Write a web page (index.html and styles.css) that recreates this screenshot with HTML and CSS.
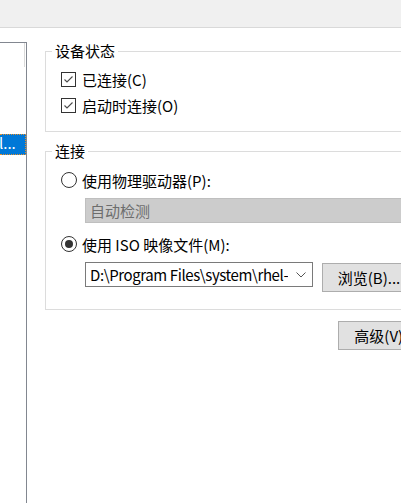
FILE: index.html
```html
<!DOCTYPE html>
<html lang="zh-CN">
<head>
<meta charset="utf-8">
<title>CD/DVD 设置</title>
<link rel="stylesheet" href="styles.css">
</head>
<body>
<div class="topbar"></div>
<div class="main">
  <div class="sidebar">
    <div class="list-head"></div>
    <div class="item-selected">l...</div>
  </div>
  <div class="content">
    <fieldset class="group status">
      <legend>设备状态</legend>
      <label class="check-row">
        <span class="checkbox"><svg viewBox="0 0 13 13" width="13" height="13"><polyline points="2.5,6.5 5,9 10.5,3.5" fill="none" stroke="#4a4a4a" stroke-width="1.1"/></svg></span>
        <span>已连接(C)</span>
      </label>
      <label class="check-row">
        <span class="checkbox"><svg viewBox="0 0 13 13" width="13" height="13"><polyline points="2.5,6.5 5,9 10.5,3.5" fill="none" stroke="#4a4a4a" stroke-width="1.1"/></svg></span>
        <span>启动时连接(O)</span>
      </label>
    </fieldset>
    <fieldset class="group connect">
      <legend>连接</legend>
      <label class="radio-row">
        <span class="radio"></span>
        <span>使用物理驱动器(P):</span>
      </label>
      <div class="select disabled">自动检测</div>
      <label class="radio-row second">
        <span class="radio checked"></span>
        <span>使用 ISO 映像文件(M):</span>
      </label>
      <div class="iso-row">
        <div class="select combo">
          <span class="value">D:\Program Files\system\rhel-8.0-x86_64-dvd.iso</span>
          <svg class="chevron" viewBox="0 0 10 6" width="10" height="6"><polyline points="0.5,0.5 5,5 9.5,0.5" fill="none" stroke="#555" stroke-width="1"/></svg>
        </div>
        <button class="btn browse">浏览(B)...</button>
      </div>
    </fieldset>
    <div class="actions">
      <button class="btn">高级(V)...</button>
    </div>
  </div>
</div>
</body>
</html>
```
FILE: styles.css
```css
html, body {
  margin: 0;
  padding: 0;
  overflow: hidden;
  background: #ffffff;
}
body {
  width: 401px;
  height: 503px;
  font-family: "Noto Sans CJK SC", "Noto Sans", sans-serif;
  font-size: 15px;
  color: #000;
}
.topbar {
  height: 27px;
  background: #f0f0f0;
  border-bottom: 1px solid #d9d9d9;
}
.main {
  display: flex;
  width: 470px;
}
.sidebar {
  width: 26px;
  height: 461px;
  margin-top: 14px;
  border-top: 1px solid #828790;
  border-right: 1px solid #828790;
  flex: none;
  overflow: hidden;
}
.list-head {
  width: 24px;
  height: 24px;
  border-right: 1px solid #dadada;
}
.item-selected {
  margin-top: 67px;
  height: 19px;
  background: #0078d7;
  border: 1px dotted #e8902a;
  border-left: none;
  color: #fff;
  font-size: 15px;
  line-height: 15px;
  white-space: nowrap;
  overflow: hidden;
  text-indent: -1px;
}
.content {
  flex: 1;
  padding-left: 18px;
}
.group {
  margin: 0;
  padding: 0 0 0 15px;
  border: 1px solid #dcdcdc;
  min-width: 0;
}
.group legend {
  margin-left: -9px;
  padding: 0 3px;
  line-height: 20px;
  height: 20px;
}
.status {
  margin-top: 13px;
  padding-top: 5px;
  padding-bottom: 13px;
}
.connect {
  margin-top: 9px;
  padding-top: 7px;
  padding-bottom: 17px;
}
.check-row {
  display: flex;
  align-items: center;
  gap: 6px;
  height: 26px;
}
.checkbox {
  width: 13px;
  height: 13px;
  border: 1px solid #333;
  display: flex;
  background: #fff;
}
.checkbox svg {
  display: block;
}
.radio-row {
  display: flex;
  align-items: center;
  gap: 5px;
  height: 24px;
}
.radio-row.second {
  margin-top: 9px;
}
.radio {
  width: 14px;
  height: 14px;
  border: 1px solid #333;
  border-radius: 50%;
  display: flex;
  align-items: center;
  justify-content: center;
}
.radio.checked::after {
  content: "";
  width: 8px;
  height: 8px;
  border-radius: 50%;
  background: #333;
}
.select {
  box-sizing: border-box;
  height: 25px;
  margin-left: 24px;
  padding-left: 4px;
  display: flex;
  align-items: center;
  line-height: 20px;
}
.select.disabled {
  margin-top: 6px;
  background: #cccccc;
  border: 1px solid #bfbfbf;
  color: #6d6d6d;
  width: 330px;
}
.iso-row {
  margin-top: 6px;
  display: flex;
  align-items: flex-start;
  gap: 9px;
}
.combo {
  width: 228px;
  border: 1px solid #7a7a7a;
  background: #fff;
  padding-right: 6px;
  gap: 8px;
}
.combo .value {
  flex: 1;
  white-space: nowrap;
  overflow: hidden;
  letter-spacing: -0.4px;
}
.chevron {
  flex: none;
  display: block;
}
.btn {
  box-sizing: border-box;
  width: 94px;
  height: 29px;
  margin: 0;
  padding: 0;
  background: #e1e1e1;
  border: 1px solid #adadad;
  font-family: inherit;
  font-size: 15px;
  color: #000;
  line-height: 20px;
  text-align: center;
  flex: none;
}
.browse {
  margin-top: 1px;
}
.actions {
  display: flex;
  margin-top: 11px;
  padding-left: 293px;
}
```
